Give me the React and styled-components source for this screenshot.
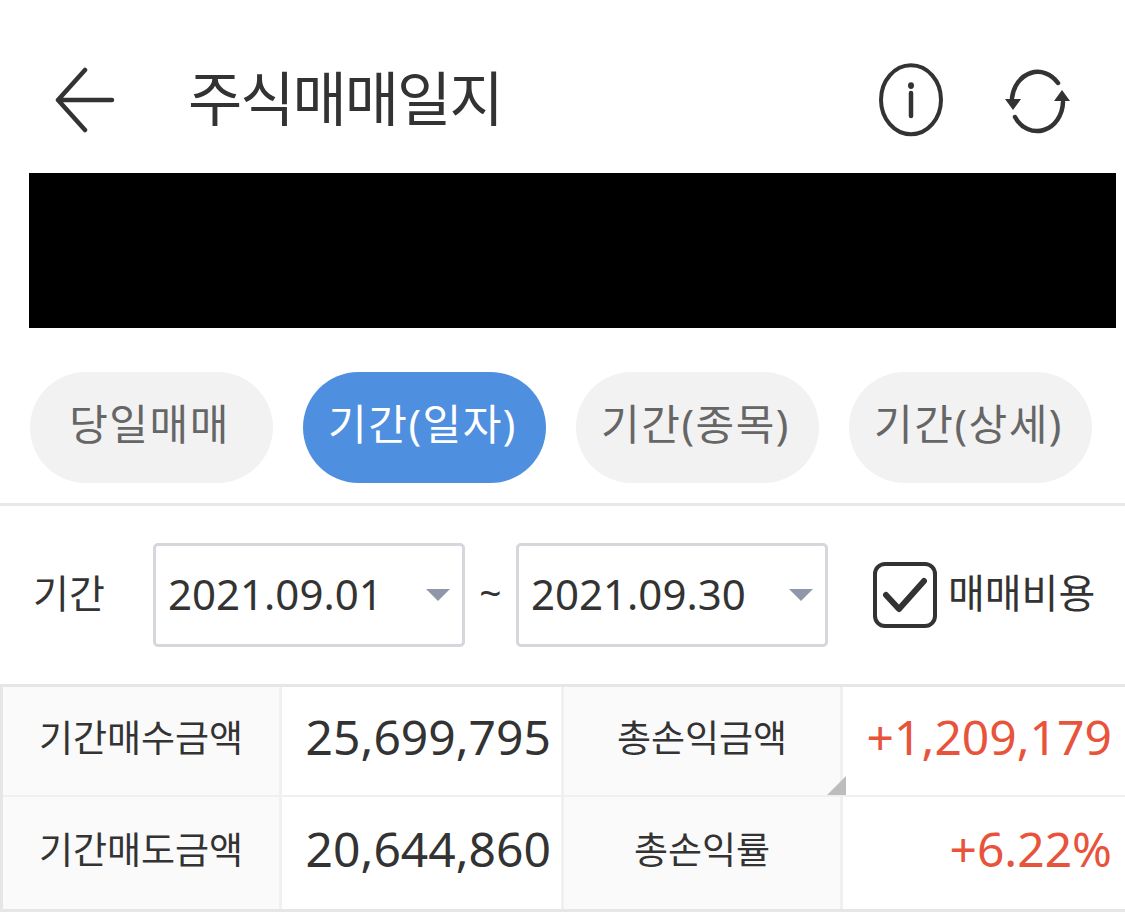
import React from 'react'
import styled, { createGlobalStyle } from 'styled-components'

const Global = createGlobalStyle`
  html, body { margin: 0; padding: 0; background: #fff; }
  body { font-family: "Noto Sans", "Noto Sans CJK KR", sans-serif; width: 1125px; height: 913px; overflow: hidden; }
  * { box-sizing: border-box; }
`

const Page = styled.div`
  width: 1125px;
  height: 913px;
  overflow: hidden;
  display: flex;
  flex-direction: column;
`

const Header = styled.header`
  height: 173px;
  padding: 26px 52px 0 55px;
  display: flex;
  align-items: center;
`

const Title = styled.h1`
  margin: 0 0 0 73px;
  padding-bottom: 8px;
  flex: 1;
  font-size: 59px;
  font-weight: 400;
  letter-spacing: -2px;
  color: #333;
`

const HeaderIcons = styled.div`
  display: flex;
  gap: 54px;
`

const Redacted = styled.div`
  height: 155px;
  margin: 0 9px 0 29px;
  background: #000;
`

const Tabs = styled.div`
  height: 178px;
  padding: 44px 33px 0 30px;
  display: flex;
  justify-content: space-between;
  border-bottom: 3px solid #e8e8e8;
`

const Tab = styled.div`
  width: 243px;
  height: 111px;
  padding: 0 4px 12px 0;
  border-radius: 56px;
  display: flex;
  align-items: center;
  justify-content: center;
  font-size: 42px;
  letter-spacing: 1.5px;
  background: ${p => (p.$active ? '#4f8fe0' : '#f2f2f2')};
  color: ${p => (p.$active ? '#fff' : '#666')};
`

const Filter = styled.div`
  height: 178px;
  padding-left: 33px;
  display: flex;
  align-items: center;
  font-size: 39px;
  color: #333;
`

const FilterLabel = styled.span`
  width: 120px;
  padding-bottom: 8px;
`

const DateBox = styled.div`
  width: 312px;
  height: 104px;
  border: 3px solid #d5d7dc;
  border-radius: 5px;
  padding: 0 12px 0 12px;
  display: flex;
  align-items: center;
  justify-content: space-between;
  font-size: 42px;
  span:first-child { padding-bottom: 4px; }
`

const Caret = styled.span`
  width: 0;
  height: 0;
  border-left: 12px solid transparent;
  border-right: 12px solid transparent;
  border-top: 12px solid #8f97a8;
`

const Tilde = styled.span`
  width: 51px;
  text-align: center;
  padding-bottom: 8px;
`

const Check = styled.div`
  width: 64px;
  height: 66px;
  margin: 0 11px 0 45px;
  border: 4px solid #333;
  border-radius: 12px;
  display: flex;
  align-items: center;
  justify-content: center;
`

const CheckLabel = styled.span`
  font-size: 40px;
  padding-bottom: 8px;
  white-space: nowrap;
`

const Table = styled.div`
  display: grid;
  grid-template-columns: 279px 282px 279px 282px;
  grid-template-rows: 110px 112px;
  border: 3px solid #e6e6e6;
`

const Cell = styled.div`
  position: relative;
  display: flex;
  align-items: center;
  padding: 0 ${p => (p.$head ? '12px' : p.$last ? '13px' : '10px')} 10px 12px;
  justify-content: ${p => (p.$head ? 'center' : 'flex-end')};
  background: ${p => (p.$head ? '#fafafa' : '#fff')};
  border-right: ${p => (p.$last ? 'none' : '3px solid #f0f0f0')};
  border-bottom: ${p => (p.$bottom ? 'none' : '2px solid #f0f0f0')};
  font-size: ${p => (p.$head ? '37px' : '48px')};
  color: ${p => (p.$red ? '#e8533c' : '#333')};
`

const Corner = styled.span`
  position: absolute;
  z-index: 1;
  right: -6px;
  bottom: 0;
  width: 0;
  height: 0;
  border-left: 19px solid transparent;
  border-bottom: 19px solid #bdbdbd;
`

const tabs = ['당일매매', '기간(일자)', '기간(종목)', '기간(상세)']

export default function App() {
  return (
    <Page>
      <Global />
      <Header>
        <svg width="60" height="66" viewBox="0 0 60 66" fill="none" stroke="#333" strokeWidth="4.5" strokeLinecap="round" strokeLinejoin="round">
          <path d="M57 33H3M30 3L3 33l27 30" />
        </svg>
        <Title>주식매매일지</Title>
        <HeaderIcons>
          <svg width="72" height="80" viewBox="0 0 72 80" fill="none" stroke="#333" strokeWidth="4" strokeLinecap="round">
            <ellipse cx="36" cy="39.75" rx="30" ry="34.5" />
            <path d="M36 33v23" strokeWidth="4.5" />
            <ellipse cx="36" cy="25.6" rx="3" ry="3.4" fill="#333" stroke="none" />
          </svg>
          <svg width="72" height="80" viewBox="0 0 72 80" fill="none" stroke="#333" strokeWidth="4.5" strokeLinecap="round">
            <path d="M57 23A26 30 0 0 0 11 38" />
            <path d="M14 57A26 30 0 0 0 62 42" />
            <path d="M4 39h16l-8 11zM53 41h16l-8-11z" fill="#333" stroke="none" />
          </svg>
        </HeaderIcons>
      </Header>
      <Redacted />
      <Tabs>
        {tabs.map((t, i) => <Tab key={t} $active={i === 1}>{t}</Tab>)}
      </Tabs>
      <Filter>
        <FilterLabel>기간</FilterLabel>
        <DateBox><span>2021.09.01</span><Caret /></DateBox>
        <Tilde>~</Tilde>
        <DateBox><span>2021.09.30</span><Caret /></DateBox>
        <Check>
          <svg width="44" height="38" viewBox="0 0 44 38" fill="none" stroke="#333" strokeWidth="6" strokeLinecap="round" strokeLinejoin="round">
            <path d="M3 19l13 14L41 5" />
          </svg>
        </Check>
        <CheckLabel>매매비용</CheckLabel>
      </Filter>
      <Table>
        <Cell $head>기간매수금액</Cell>
        <Cell>25,699,795</Cell>
        <Cell $head>총손익금액<Corner /></Cell>
        <Cell $red $last>+1,209,179</Cell>
        <Cell $head $bottom>기간매도금액</Cell>
        <Cell $bottom>20,644,860</Cell>
        <Cell $head $bottom>총손익률</Cell>
        <Cell $red $last $bottom>+6.22%</Cell>
      </Table>
    </Page>
  )
}
